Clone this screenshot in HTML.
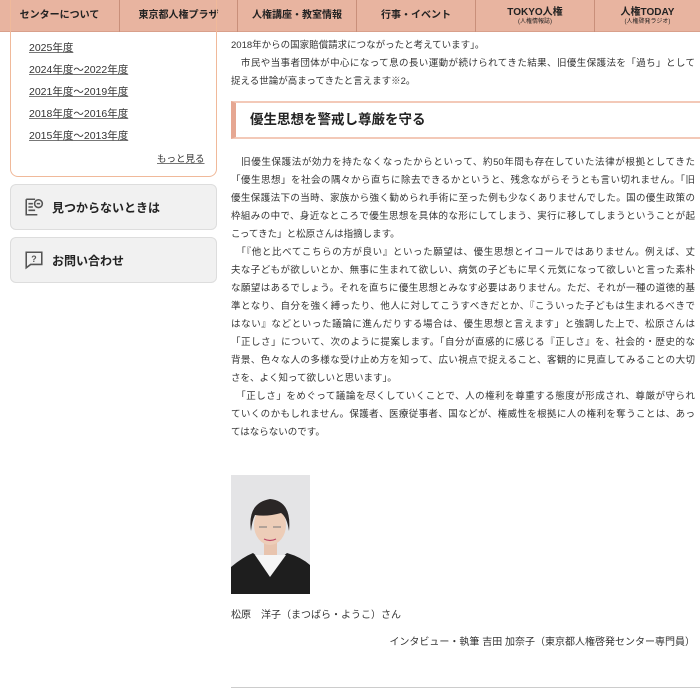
<!DOCTYPE html>
<html><head><meta charset="utf-8"><style>
*{margin:0;padding:0;box-sizing:border-box}
body{width:700px;height:700px;overflow:hidden;background:#fff;font-family:"Liberation Sans","Noto Sans CJK JP",sans-serif;color:#333;position:relative}
.nav{position:absolute;top:0;left:0;width:700px;height:32px;background:#e8b4a0;display:flex;border-bottom:1px solid #d9a08b}
.nav div{height:32px;border-right:1px solid #c98f7a;display:flex;flex-direction:column;align-items:center;justify-content:center;font-size:10px;font-weight:bold;color:#222;line-height:1}
.nav small{font-size:6px;font-weight:normal;margin-top:1px}
.side{position:absolute;left:10px;top:-10px;width:207px;height:187px;border:1px solid #f0b99a;border-radius:0 0 8px 8px;border-top:none}
.side a{position:absolute;left:18px;font-size:10.5px;color:#333;text-decoration:underline;text-decoration-color:#777}
.btn{position:absolute;left:10px;width:207px;height:46px;background:#f1f1f1;border:1px solid #ddd;border-radius:6px;font-size:12px;font-weight:bold;color:#222;display:flex;align-items:center}
.btn svg{margin:0 8px 0 13px}
.main{position:absolute;left:231px;width:464px;font-size:9.5px;line-height:18px;color:#333;overflow:hidden}
.l{text-align:justify;text-align-last:justify;white-space:nowrap;height:18px}
.e{text-align-last:left}
.h{position:absolute;left:231px;top:101px;width:469px;height:38px;border-top:2px solid #f3c9b8;border-bottom:2px solid #f3c9b8;border-left:5px solid #e6a792;font-size:13.5px;font-weight:bold;color:#222;padding-left:14px;line-height:34px}
</style></head><body>
<div class="nav">
<div style="width:120px">センターについて</div>
<div style="width:118px">東京都人権プラザ</div>
<div style="width:119px">人権講座・教室情報</div>
<div style="width:119px">行事・イベント</div>
<div style="width:119px">TOKYO人権<small>(人権情報誌)</small></div>
<div style="width:105px;border-right:none">人権TODAY<small>(人権啓発ラジオ)</small></div>
</div>
<div class="side">
<a style="top:50px">2025年度</a>
<a style="top:72px">2024年度～2022年度</a>
<a style="top:94px">2021年度～2019年度</a>
<a style="top:116px">2018年度～2016年度</a>
<a style="top:138px">2015年度～2013年度</a>
<a style="top:161px;left:146px;font-size:9.5px">もっと見る</a>
</div>
<div class="btn" style="top:184px"><svg width="20" height="20" viewBox="0 0 18 18" fill="none" stroke="#555" stroke-width="1.4"><path d="M2 2h8M2 2v14h10M4 6h4M4 9h4M4 12h6"/><circle cx="13" cy="6" r="3.5"/><path d="M11.5 6h3"/></svg>見つからないときは</div>
<div class="btn" style="top:237px"><svg width="20" height="20" viewBox="0 0 18 18" fill="none" stroke="#555" stroke-width="1.4"><path d="M2 2h14v11H6l-4 3z"/><text x="6.5" y="11" font-size="8" fill="#555" stroke="none" font-family="Liberation Sans">?</text></svg>お問い合わせ</div>

<div class="main" style="top:37px">
<div class="l e">2018年からの国家賠償請求につながったと考えています」。</div>
<div class="l">　市民や当事者団体が中心になって息の長い運動が続けられてきた結果、旧優生保護法を「過ち」として</div>
<div class="l e">捉える世論が高まってきたと言えます※2。</div>
</div>
<div class="h">優生思想を警戒し尊厳を守る</div>
<div class="main" style="top:154px">
<div class="l">　旧優生保護法が効力を持たなくなったからといって、約50年間も存在していた法律が根拠としてきた</div>
<div class="l">「優生思想」を社会の隅々から直ちに除去できるかというと、残念ながらそうとも言い切れません。「旧</div>
<div class="l">優生保護法下の当時、家族から強く勧められ手術に至った例も少なくありませんでした。国の優生政策の</div>
<div class="l">枠組みの中で、身近なところで優生思想を具体的な形にしてしまう、実行に移してしまうということが起</div>
<div class="l e">こってきた」と松原さんは指摘します。</div>
<div class="l">　「『他と比べてこちらの方が良い』といった願望は、優生思想とイコールではありません。例えば、丈</div>
<div class="l">夫な子どもが欲しいとか、無事に生まれて欲しい、病気の子どもに早く元気になって欲しいと言った素朴</div>
<div class="l">な願望はあるでしょう。それを直ちに優生思想とみなす必要はありません。ただ、それが一種の道徳的基</div>
<div class="l">準となり、自分を強く縛ったり、他人に対してこうすべきだとか、『こういった子どもは生まれるべきで</div>
<div class="l">はない』などといった議論に進んだりする場合は、優生思想と言えます」と強調した上で、松原さんは</div>
<div class="l">「正しさ」について、次のように提案します。「自分が直感的に感じる『正しさ』を、社会的・歴史的な</div>
<div class="l">背景、色々な人の多様な受け止め方を知って、広い視点で捉えること、客観的に見直してみることの大切</div>
<div class="l e">さを、よく知って欲しいと思います」。</div>
<div class="l">　「正しさ」をめぐって議論を尽くしていくことで、人の権利を尊重する態度が形成され、尊厳が守られ</div>
<div class="l">ていくのかもしれません。保護者、医療従事者、国などが、権威性を根拠に人の権利を奪うことは、あっ</div>
<div class="l e">てはならないのです。</div>
</div>
<svg style="position:absolute;left:231px;top:475px" width="79" height="119" viewBox="0 0 79 119">
<rect width="79" height="119" fill="#e4e4e6"/>
<path d="M0 119V92q12-10 22-14l17 14 17-14q14 4 23 12v29z" fill="#1e1e1e"/>
<path d="M24 80l15 22 16-22z" fill="#f5f5f5"/>
<rect x="33" y="62" width="13" height="18" fill="#e8c4ae"/>
<ellipse cx="39" cy="50" rx="16" ry="20" fill="#edcdb8"/>
<path d="M20 56q-4-28 19-32q22 2 19 32q-2-14-8-18q-14 4-26 2q-3 6-4 16z" fill="#2a2626"/>
<path d="M28 52h8M42 52h8" stroke="#777" stroke-width="1"/>
<path d="M33 64q6 3 12 0" stroke="#b46" stroke-width="1.2" fill="none"/>
</svg>
<div style="position:absolute;left:231px;top:606px;font-size:10px;color:#333">松原　洋子（まつばら・ようこ）さん</div>
<div style="position:absolute;right:5px;top:633px;font-size:10px;color:#333">インタビュー・執筆 吉田 加奈子（東京都人権啓発センター専門員）</div>
<div style="position:absolute;left:231px;top:687px;width:469px;height:1px;background:#ccc"></div>
</body></html>
